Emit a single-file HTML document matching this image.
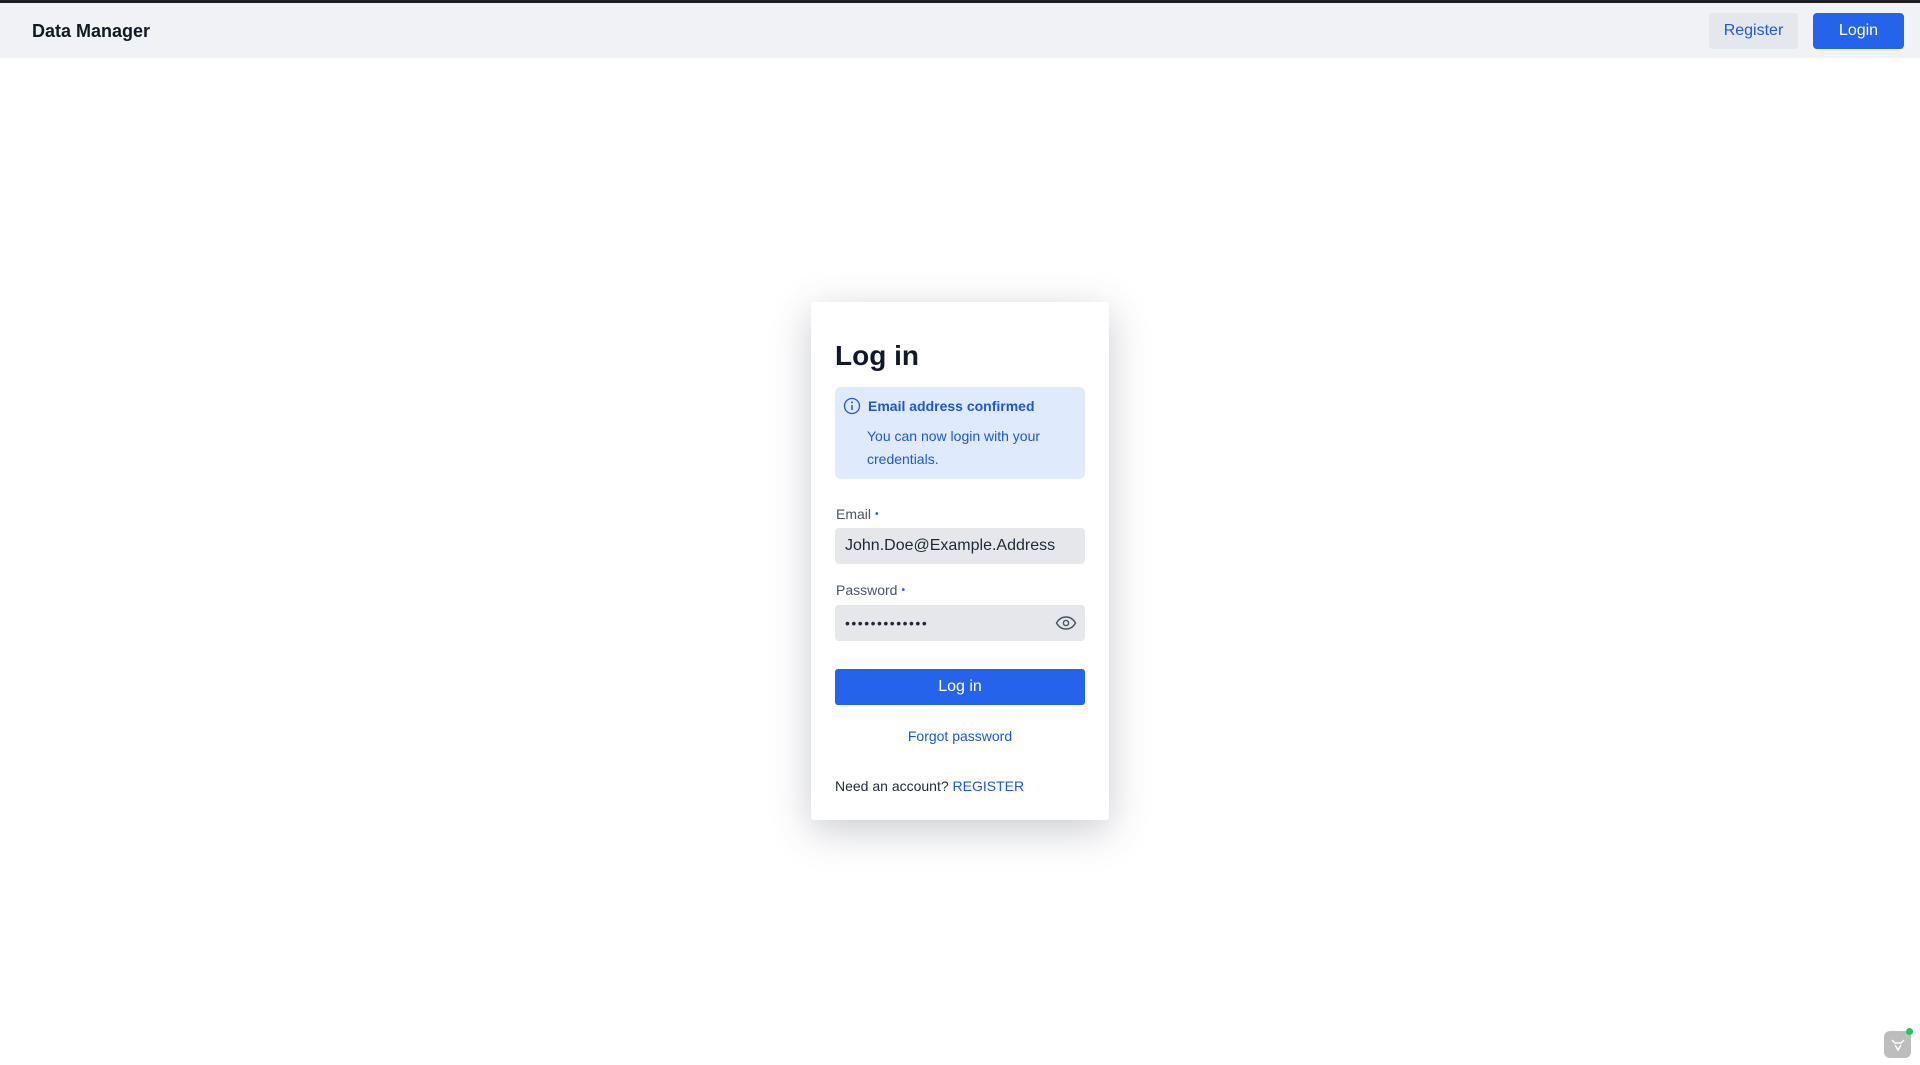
<!DOCTYPE html>
<html><head><meta charset="utf-8"><style>
*{box-sizing:border-box;margin:0;padding:0}
html,body{width:1920px;height:1065px;overflow:hidden;background:#fff;font-family:"Liberation Sans",sans-serif;color:#111827}
.top{position:absolute;left:0;top:0;width:1920px;height:3px;background:#1f1f24}
.hdr{position:absolute;left:0;top:3px;width:1920px;height:55px;background:#f0f2f5}
.hdr .t{position:absolute;left:32px;top:18px;font-size:18px;font-weight:600;color:#111827}
.btn{position:absolute;top:10px;height:36px;border-radius:4px;font-size:16px;display:flex;align-items:center;justify-content:center}
.reg{left:1709px;width:89px;background:#e4e7eb;color:#2257d6}
.log{left:1813px;width:91px;background:#2563eb;color:#fff}
.card{position:absolute;left:811px;top:302px;width:298px;height:518px;background:#fff;border-radius:3px;box-shadow:0 10px 40px rgba(60,70,90,.28)}
.abs{position:absolute}
.l20{line-height:20px}
.alert{position:absolute;left:24px;top:85px;width:250px;height:92px;background:#dfeafc;border-radius:6px;color:#1d56d8}
.label{font-size:14px;color:#4b5563;line-height:20px}
.label b{color:#2563eb;font-size:10px;margin-left:4px;vertical-align:2px}
.inp{position:absolute;left:24px;width:250px;height:36px;background:#e5e7eb;border-radius:4px}
</style></head><body>
<div class="top"></div>
<div class="hdr"><div class="t">Data Manager</div>
<div class="btn reg">Register</div><div class="btn log">Login</div></div>
<div class="card">
<div class="abs" style="left:24px;top:36px;font-size:28px;line-height:36px;font-weight:600;color:#111827">Log in</div>
<div class="alert">
<svg class="abs" style="left:8px;top:10px" width="18" height="18" viewBox="0 0 18 18"><circle cx="9" cy="9" r="7.5" fill="none" stroke="#1d56d8" stroke-width="1.3"/><line x1="9" y1="8" x2="9" y2="13" stroke="#1d56d8" stroke-width="1.5"/><circle cx="9" cy="5.4" r="1" fill="#1d56d8"/></svg>
<div class="abs l20" style="left:33px;top:9px;font-size:14px;font-weight:bold">Email address confirmed</div>
<div class="abs" style="left:32px;top:38px;font-size:14px;line-height:23px;width:200px">You can now login with your credentials.</div>
</div>
<div class="abs label" style="left:25px;top:202px">Email<b>•</b></div>
<div class="inp" style="top:226px"><span class="abs" style="left:10px;top:8px;font-size:16px;line-height:20px;color:#1f2937">John.Doe@Example.Address</span></div>
<div class="abs label" style="left:25px;top:278px">Password<b>•</b></div>
<div class="inp" style="top:303px"><span class="abs" style="left:10px;top:9px;font-size:14px;line-height:18px;letter-spacing:1.5px;color:#1f2937">•••••••••••••</span>
<svg class="abs" style="left:220px;top:11px" width="22" height="14" viewBox="0 0 22 14"><path d="M1.5 7C4 2.5 7.5 1 11 1s7 1.5 9.5 6C18 11.5 14.5 13 11 13S4 11.5 1.5 7z" fill="none" stroke="#4b5563" stroke-width="1.4"/><circle cx="11" cy="7" r="2.6" fill="none" stroke="#4b5563" stroke-width="1.4"/></svg></div>
<div class="abs" style="left:24px;top:367px;width:250px;height:36px;background:#2563eb;border-radius:3px;color:#fff;font-size:16px;display:flex;align-items:center;justify-content:center;font-weight:500">Log in</div>
<div class="abs l20" style="left:24px;top:424px;width:250px;text-align:center;font-size:14px;color:#1d56d8">Forgot password</div>
<div class="abs l20" style="left:24px;top:474px;font-size:14px;color:#1f2937">Need an account? <span style="color:#1d56d8">REGISTER</span></div>
</div>
<div class="abs" style="left:1884px;top:1031px;width:27px;height:27px;background:#bdbdbd;border-radius:6px"></div>
<div class="abs" style="left:1906px;top:1028px;width:7px;height:7px;background:#22c55e;border-radius:50%"></div>
<svg class="abs" style="left:1890px;top:1037px" width="16" height="16" viewBox="0 0 16 16"><path d="M2 3l3 3h6l3-3M5 8l3 5 3-5" fill="none" stroke="#fff" stroke-width="1.5"/></svg>
</body></html>
